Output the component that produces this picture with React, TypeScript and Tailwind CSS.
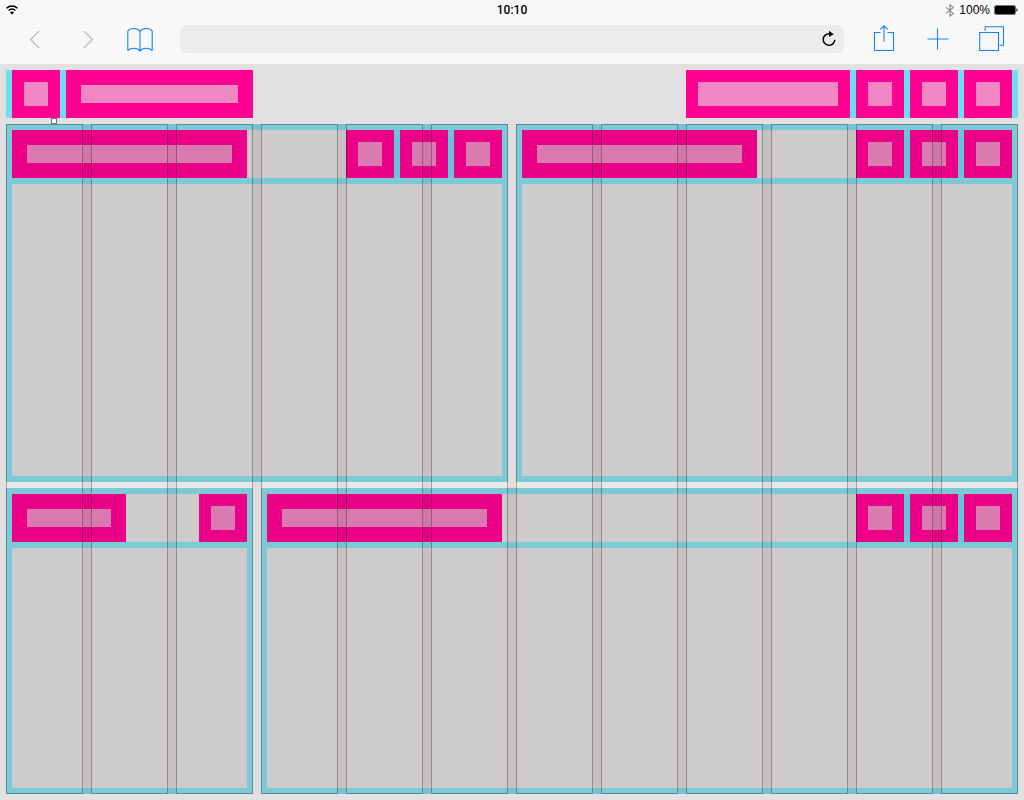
import type { ReactNode } from 'react';
import clsx from 'clsx';

const COLUMNS = 12;

function StatusBar() {
  return (
    <div className="grid grid-cols-3 items-center h-5 px-1.5 text-xs text-black">
      <svg width="12" height="10" viewBox="0 0 12 10" aria-label="Wi-Fi">
        <g fill="none" stroke="#000" strokeWidth="1.6">
          <path d="M.6 3.2C3.6.2 8.4.2 11.4 3.2" />
          <path d="M2.6 5.5c1.9-1.8 4.9-1.8 6.8 0" />
        </g>
        <path d="M3.9 7.2c1.2-1 3-1 4.2 0L6 9.5z" />
      </svg>

      <span className="text-center font-medium font-['Roboto',sans-serif]">
        10:10
      </span>

      <div className="flex items-center justify-end gap-1">
        <svg width="10" height="13" viewBox="0 0 10 13" aria-label="Bluetooth">
          <path
            d="M1.2 3.4l7 6L5 12.2V.8l3.200 2.600-7 6"
            fill="none"
            stroke="#8a8a8a"
            strokeWidth="1.1"
          />
        </svg>
        <span>100%</span>
        <svg width="24" height="10" viewBox="0 0 24 10" aria-label="Battery">
          <rect x=".5" y=".5" width="21" height="9" rx="1.5" fill="#f8f8f8" stroke="#777" />
          <rect x="1" y="1" width="20" height="8" rx="1" />
          <path d="M22.5 3.2c1.4.3 1.4 3.3 0 3.6z" />
        </svg>
      </div>
    </div>
  );
}

type ToolbarButtonProps = {
  label: string;
  disabled?: boolean;
  children: ReactNode;
};

function ToolbarButton({ label, disabled, children }: ToolbarButtonProps) {
  return (
    <button
      type="button"
      aria-label={label}
      disabled={disabled}
      className={clsx(
        'shrink-0',
        disabled ? 'text-[#c2c2c2]' : 'text-[#1683fb] cursor-pointer',
      )}
    >
      <svg
        width="26"
        height="28"
        viewBox="0 0 26 28"
        fill="none"
        stroke="currentColor"
        strokeWidth="1.1"
        className="block"
      >
        {children}
      </svg>
    </button>
  );
}

function BrowserBar() {
  return (
    <header className="bg-[#f8f8f8]">
      <StatusBar />

      <div className="flex items-center gap-[27px] h-11 pl-[23px] pr-[19px] pb-1.5">
        <nav className="flex gap-[26px]">
          <ToolbarButton label="Back" disabled>
            <path d="M16.2 6l-8.700 8.400 8.700 8.600" strokeWidth="1.5" />
          </ToolbarButton>
          <ToolbarButton label="Forward" disabled>
            <path d="M8.700 6l8.700 8.400-8.700 8.600" strokeWidth="1.5" />
          </ToolbarButton>
          <ToolbarButton label="Bookmarks">
            <path d="M.8 25.8V6C3.5 2.6 10.5 2.6 13 6.2 15.5 2.6 22.5 2.6 25.2 6v19.8" />
            <path d="M.8 25.6c2.7-3 9.7-3.2 12.2.4 2.5-3.6 9.5-3.4 12.2-.4M13 6.2v20.4" />
          </ToolbarButton>
        </nav>

        <div className="relative flex-1">
          <input
            type="text"
            aria-label="Address"
            className="block w-full h-7 rounded-md bg-[#ebedec] pl-3 pr-10 text-sm outline-none"
          />
          <button
            type="button"
            aria-label="Reload"
            className="absolute right-[7px] top-[5px] cursor-pointer"
          >
            <svg width="16" height="18" viewBox="0 0 16 18" className="block">
              <path
                d="M8.5 3.7A5.8 5.8 0 1 0 13.800 9.800"
                fill="none"
                stroke="#000"
                strokeWidth="1.5"
              />
              <path d="M8 .8l4.700 3.400L8 7z" />
            </svg>
          </button>
        </div>

        <nav className="flex gap-7">
          <ToolbarButton label="Share">
            <path d="M9.5 7.500h-6v18h19v-18h-6" />
            <path d="M13 .8v15.700M9.300 4.300L13 .800l3.700 3.500" />
          </ToolbarButton>
          <ToolbarButton label="New tab">
            <path d="M2.500 14h21M12.500 3.500v21" />
          </ToolbarButton>
          <ToolbarButton label="Tabs">
            <path d="M.7 7.500h18.800v18H.7z" />
            <path d="M6.200 6V1.700h18.300v18.500h-4" />
          </ToolbarButton>
        </nav>
      </div>
    </header>
  );
}

function IconBlock({ muted }: { muted?: boolean }) {
  return (
    <div
      className={clsx(
        'size-12 shrink-0 p-3',
        muted ? 'bg-[#eb0088]' : 'bg-[#ff0093]',
      )}
    >
      <div className={clsx('h-full', muted ? 'bg-[#d97bb0]' : 'bg-[#ef88c2]')} />
    </div>
  );
}

function TitleBlock({ width, muted }: { width: string; muted?: boolean }) {
  return (
    <div
      className={clsx(
        'h-12 p-[15px]',
        width,
        muted ? 'bg-[#eb0088]' : 'bg-[#ff0093]',
      )}
    >
      <div className={clsx('h-full', muted ? 'bg-[#d97bb0]' : 'bg-[#ef88c2]')} />
    </div>
  );
}

function PageBar() {
  return (
    <div className="flex justify-between">
      <div className="flex gap-1.5 pl-1.5 bg-[#6fdef0]">
        <IconBlock />
        <TitleBlock width="w-[187px]" />
      </div>

      <div className="flex gap-1.5 pr-1.5 bg-[#6fdef0]">
        <div className="w-[164px] h-12 p-3 bg-[#ff0093]">
          <div className="h-full bg-[#ef88c2]" />
        </div>
        <IconBlock />
        <IconBlock />
        <IconBlock />
      </div>
    </div>
  );
}

type PanelProps = {
  span: string;
  titleWidth: string;
  actions: number;
};

function Panel({ span, titleWidth, actions }: PanelProps) {
  return (
    <section
      className={clsx(
        'flex flex-col border-6 border-[#7dcad7] bg-[#cdccca]',
        span,
      )}
    >
      <div className="flex justify-between border-b-6 border-[#7dcad7]">
        <TitleBlock width={titleWidth} muted />
        <div className="flex gap-1.5 bg-[#67c6d9]">
          {Array.from({ length: actions }, (_, i) => (
            <IconBlock key={i} muted />
          ))}
        </div>
      </div>
    </section>
  );
}

// Column outlines with shaded gutters, drawn over the panels
function ColumnGuides() {
  return (
    <div className="absolute inset-0 grid grid-cols-12 gap-2 pointer-events-none">
      {Array.from({ length: COLUMNS }, (_, i) => (
        <div key={i} className="relative">
          <div className="h-full border border-black/30" />
          {i < COLUMNS - 1 && (
            <div className="absolute inset-y-0 left-full w-2 bg-[#500020]/5" />
          )}
        </div>
      ))}
    </div>
  );
}

export default function App() {
  return (
    <div className="flex flex-col min-h-screen bg-[#e2e0e1] font-['Liberation_Sans',Arial,sans-serif]">
      <BrowserBar />

      <main className="flex flex-col flex-1 gap-1.5 p-1.5">
        <PageBar />

        <div className="relative flex flex-1 bg-[#e9e8e8]">
          <div className="grid grid-cols-12 grid-rows-[358fr_306fr] gap-x-2 gap-y-1.5 flex-1">
            <Panel span="col-span-6" titleWidth="w-[235px]" actions={3} />
            <Panel span="col-span-6" titleWidth="w-[235px]" actions={3} />
            <Panel span="col-span-3" titleWidth="w-[114px]" actions={1} />
            <Panel span="col-span-9" titleWidth="w-[235px]" actions={3} />
          </div>
          <ColumnGuides />
          <div className="absolute left-[45px] -top-1.5 size-1.5 border border-[#777] bg-white" />
        </div>
      </main>
    </div>
  );
}
